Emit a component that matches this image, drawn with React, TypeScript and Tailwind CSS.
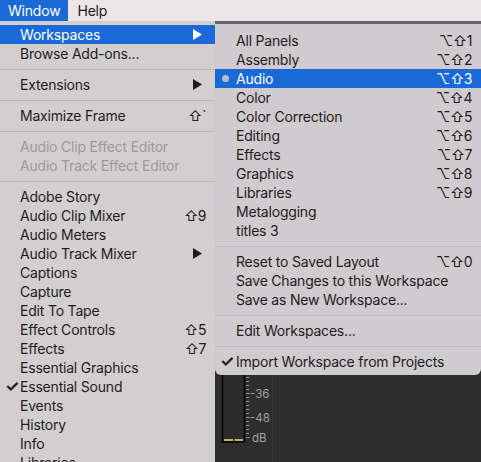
import React from "react";

type Item = {
  label?: string;
  sc?: string;
  arrow?: boolean;
  check?: boolean;
  dot?: boolean;
  active?: boolean;
  disabled?: boolean;
  sep?: boolean;
};

const mainItems: Item[] = [
  { label: "Workspaces", arrow: true, active: true },
  { label: "Browse Add-ons..." },
  { sep: true },
  { label: "Extensions", arrow: true },
  { sep: true },
  { label: "Maximize Frame", sc: "⇧`" },
  { sep: true },
  { label: "Audio Clip Effect Editor", disabled: true },
  { label: "Audio Track Effect Editor", disabled: true },
  { sep: true },
  { label: "Adobe Story" },
  { label: "Audio Clip Mixer", sc: "⇧9" },
  { label: "Audio Meters" },
  { label: "Audio Track Mixer", arrow: true },
  { label: "Captions" },
  { label: "Capture" },
  { label: "Edit To Tape" },
  { label: "Effect Controls", sc: "⇧5" },
  { label: "Effects", sc: "⇧7" },
  { label: "Essential Graphics" },
  { label: "Essential Sound", check: true },
  { label: "Events" },
  { label: "History" },
  { label: "Info" },
  { label: "Libraries" },
];

const subItems: Item[] = [
  { label: "All Panels", sc: "⌥⇧1" },
  { label: "Assembly", sc: "⌥⇧2" },
  { label: "Audio", sc: "⌥⇧3", active: true, dot: true },
  { label: "Color", sc: "⌥⇧4" },
  { label: "Color Correction", sc: "⌥⇧5" },
  { label: "Editing", sc: "⌥⇧6" },
  { label: "Effects", sc: "⌥⇧7" },
  { label: "Graphics", sc: "⌥⇧8" },
  { label: "Libraries", sc: "⌥⇧9" },
  { label: "Metalogging" },
  { label: "titles 3" },
  { sep: true },
  { label: "Reset to Saved Layout", sc: "⌥⇧0" },
  { label: "Save Changes to this Workspace" },
  { label: "Save as New Workspace..." },
  { sep: true },
  { label: "Edit Workspaces..." },
  { sep: true },
  { label: "Import Workspace from Projects", check: true },
];

function Row({ item, pl, pr, checkX }: { item: Item; pl: string; pr: string; checkX: string }) {
  if (item.sep) {
    return (
      <div className="flex h-[12px] items-center">
        <div className="h-px w-full bg-[#bdb9bb]" />
      </div>
    );
  }
  const color = item.active
    ? "bg-[#1b69d6] text-white"
    : item.disabled
    ? "text-[#9d999b]"
    : "text-[#1e1c1d]";
  return (
    <div className={`relative flex h-[19px] items-center justify-between ${pl} ${pr} ${color}`}>
      {item.check && (
        <span className={`absolute ${checkX} top-0 text-[16px] font-bold leading-[19px]`}>✓</span>
      )}
      {item.dot && (
        <span className="absolute left-[7px] top-[6px] h-[7px] w-[7px] rounded-full bg-[#b9bfca]" />
      )}
      <span className="whitespace-nowrap tracking-[-0.2px]">{item.label}</span>
      {item.sc && <span className="whitespace-nowrap text-[14px] tracking-[-0.5px]">{item.sc}</span>}
      {item.arrow && (
        <svg width="9" height="11" viewBox="0 0 9 11" className="mr-[4px]">
          <path d="M0 0 L9 5.5 L0 11 Z" fill={item.active ? "#ffffff" : "#1e1c1d"} />
        </svg>
      )}
    </div>
  );
}

function Meter() {
  return (
    <svg width="57" height="87" viewBox="0 0 57 87">
      <rect x="7.5" y="-1" width="22" height="68" fill="#2b2b2b" stroke="#050505" strokeWidth="1.5" />
      <line x1="9" y1="65" x2="18" y2="65" stroke="#e7e27a" strokeWidth="1.5" />
      <line x1="19.5" y1="65" x2="28" y2="65" stroke="#e7e27a" strokeWidth="1.5" />
      {[2, 6, 10, 14, 18, 22, 26, 30, 34, 38, 42, 46, 50, 54, 58, 62].map((y) => (
        <line key={y} x1="31" y1={y + 0.5} x2={y === 18 || y === 42 || y === 62 ? 35 : 34} y2={y + 0.5} stroke="#8a8a8a" strokeWidth="1" />
      ))}
      <text x="35" y="23" fill="#a3a3a3" fontSize="11.5" fontFamily="Inter, sans-serif">-36</text>
      <text x="35" y="47" fill="#a3a3a3" fontSize="11.5" fontFamily="Inter, sans-serif">-48</text>
      <text x="37" y="67" fill="#a3a3a3" fontSize="11.5" fontFamily="Inter, sans-serif">dB</text>
    </svg>
  );
}

export default function App() {
  return (
    <div
      className="flex h-[462px] w-[481px] flex-col overflow-hidden bg-[#d3cfd1] text-[14px]"
      style={{ fontFamily: "Inter, 'Noto Sans', sans-serif" }}
    >
      {/* Menu bar */}
      <div className="flex h-[21px] shrink-0 items-center bg-[#ede5e7] text-[#1e1c1d]">
        <div className="flex h-full items-center bg-[#1b69d6] pl-[8px] pr-[8px] tracking-[-0.2px] text-white">Window</div>
        <div className="pl-[9px] tracking-[-0.2px]">Help</div>
      </div>

      <div className="flex min-h-0 flex-1">
        {/* Window menu */}
        <div className="w-[215px] shrink-0 bg-[#d3cfd1] pt-[4px]">
          {mainItems.map((it, i) => (
            <Row key={i} item={it} pl="pl-[20px]" pr="pr-[9px]" checkX="left-[5px]" />
          ))}
        </div>

        {/* Workspaces submenu + app behind */}
        <div className="flex min-w-0 flex-1 flex-col bg-[#2d2d2d]">
          <div className="h-[3px] shrink-0 bg-[#67626a]" />
          <div className="shrink-0 rounded-b-[6px] bg-[#cfcbce] pb-[4px] pt-[7px]">
            {subItems.map((it, i) => (
              <Row key={i} item={it} pl="pl-[21px]" pr="pr-[9px]" checkX="left-[5px]" />
            ))}
          </div>
          <div className="flex flex-1">
            <div className="w-[57px] shrink-0">
              <Meter />
            </div>
            <div className="flex-1 border-l border-[#3b3b3b]" />
          </div>
        </div>
      </div>
    </div>
  );
}
